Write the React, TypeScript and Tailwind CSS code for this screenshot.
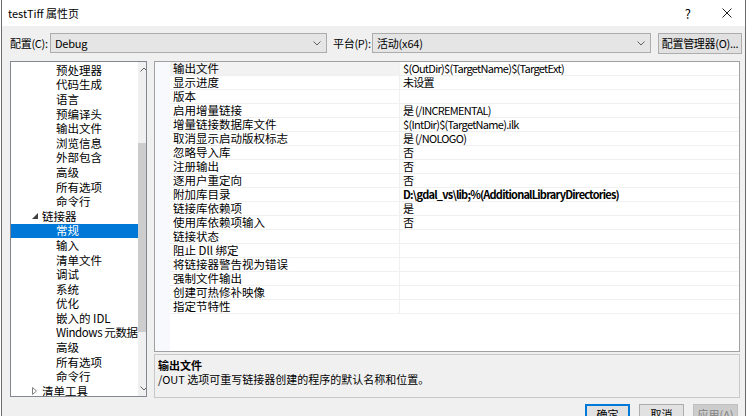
import React from "react";

const FONT = '"Noto Sans CJK SC", "Noto Sans", sans-serif';

interface TreeItem {
  label: string;
  level: 0 | 1;
  expanded?: boolean;
  selected?: boolean;
}

const treeItems: TreeItem[] = [
  { label: "预处理器", level: 1 },
  { label: "代码生成", level: 1 },
  { label: "语言", level: 1 },
  { label: "预编译头", level: 1 },
  { label: "输出文件", level: 1 },
  { label: "浏览信息", level: 1 },
  { label: "外部包含", level: 1 },
  { label: "高级", level: 1 },
  { label: "所有选项", level: 1 },
  { label: "命令行", level: 1 },
  { label: "链接器", level: 0, expanded: true },
  { label: "常规", level: 1, selected: true },
  { label: "输入", level: 1 },
  { label: "清单文件", level: 1 },
  { label: "调试", level: 1 },
  { label: "系统", level: 1 },
  { label: "优化", level: 1 },
  { label: "嵌入的 IDL", level: 1 },
  { label: "Windows 元数据", level: 1 },
  { label: "高级", level: 1 },
  { label: "所有选项", level: 1 },
  { label: "命令行", level: 1 },
  { label: "清单工具", level: 0, expanded: false },
];

const props: { name: string; value: string; bold?: boolean }[] = [
  { name: "输出文件", value: "$(OutDir)$(TargetName)$(TargetExt)" },
  { name: "显示进度", value: "未设置" },
  { name: "版本", value: "" },
  { name: "启用增量链接", value: "是 (/INCREMENTAL)" },
  { name: "增量链接数据库文件", value: "$(IntDir)$(TargetName).ilk" },
  { name: "取消显示启动版权标志", value: "是 (/NOLOGO)" },
  { name: "忽略导入库", value: "否" },
  { name: "注册输出", value: "否" },
  { name: "逐用户重定向", value: "否" },
  { name: "附加库目录", value: "D:\\gdal_vs\\lib;%(AdditionalLibraryDirectories)", bold: true },
  { name: "链接库依赖项", value: "是" },
  { name: "使用库依赖项输入", value: "否" },
  { name: "链接状态", value: "" },
  { name: "阻止 Dll 绑定", value: "" },
  { name: "将链接器警告视为错误", value: "" },
  { name: "强制文件输出", value: "" },
  { name: "创建可热修补映像", value: "" },
  { name: "指定节特性", value: "" },
];

function Chevron({ up = false }: { up?: boolean }) {
  return (
    <svg width="8" height="5" viewBox="0 0 8 5" className={up ? "rotate-180" : ""}>
      <path d="M0.5 0.5 L4 4 L7.5 0.5" fill="none" stroke="#606060" strokeWidth="1" />
    </svg>
  );
}

function Combo({ value, width }: { value: string; width: string }) {
  return (
    <div className={`${width} h-[20px] shrink-0 flex items-center justify-between bg-[#e5e5e5] border border-[#acacac] pl-[4px] pr-[5px]`}>
      <span className="text-[11px] tracking-[-0.2px]">{value}</span>
      <Chevron />
    </div>
  );
}

export default function App() {
  return (
    <div className="w-[748px] h-[416px] overflow-hidden bg-white text-[11.5px] leading-[13px] text-black whitespace-nowrap" style={{ fontFamily: FONT }}>
      <div className="ml-px w-[745px] h-full flex flex-col border-l border-r border-[#6b6b6b]">
        {/* Title bar */}
        <div className="h-[26px] shrink-0 bg-white flex items-center pl-[6px]">
          <span className="text-[11px]">testTiff 属性页</span>
          <span className="ml-auto mr-[31px] text-[13px]">?</span>
          <svg width="10" height="10" viewBox="0 0 10 10" className="mr-[13px]">
            <path d="M0.5 0.5 L9.5 9.5 M9.5 0.5 L0.5 9.5" stroke="#222" strokeWidth="1" />
          </svg>
        </div>

        <div className="flex-1 bg-[#f0f0f0] pl-[8px] pr-[4px] pt-[7px]">
          {/* Config row */}
          <div className="h-[20px] flex items-center text-[11px] tracking-[-0.3px]">
            <span className="w-[40px] shrink-0">配置(C):</span>
            <Combo value="Debug" width="w-[277px]" />
            <span className="ml-[6px] w-[39px] shrink-0">平台(P):</span>
            <Combo value="活动(x64)" width="w-[279px]" />
            <div className="ml-[7px] w-[84px] h-[21px] shrink-0 flex items-center justify-center bg-[#e1e1e1] border border-[#adadad]">
              配置管理器(O)...
            </div>
          </div>

          {/* Main */}
          <div className="mt-[8px] flex gap-[7px]">
            {/* Tree */}
            <div className="w-[137px] h-[336px] flex border border-[#828790] bg-white overflow-hidden">
              <div className="flex-1 pt-px">
                {treeItems.map((it, i) => (
                  <div
                    key={i}
                    className={`h-[14.6px] flex items-center ${it.selected ? "bg-[#0078d7] text-white" : ""} ${it.level === 1 ? "pl-[45px]" : "pl-[21px]"}`}
                  >
                    {it.level === 0 && (
                      <span className="w-[10px] flex items-center">
                        {it.expanded ? (
                          <svg width="6" height="6" viewBox="0 0 6 6">
                            <path d="M6 0 L6 6 L0 6 Z" fill="#404040" />
                          </svg>
                        ) : (
                          <svg width="5" height="8" viewBox="0 0 5 8">
                            <path d="M0.5 0.5 L4.5 4 L0.5 7.5 Z" fill="none" stroke="#808080" strokeWidth="1" />
                          </svg>
                        )}
                      </span>
                    )}
                    <span className={it.label.startsWith("Windows") ? "tracking-[-0.4px]" : ""}>{it.label}</span>
                  </div>
                ))}
              </div>
              {/* Scrollbar */}
              <div className="w-[13px] shrink-0 bg-[#f0f0f0] flex flex-col items-center">
                <div className="h-[14px] flex items-center justify-center">
                  <Chevron up />
                </div>
                <div className="h-[67px]" />
                <div className="w-[13px] h-[189px] bg-[#cdcdcd]" />
                <div className="flex-1" />
                <div className="h-[16px] flex items-center justify-center">
                  <Chevron />
                </div>
              </div>
            </div>

            {/* Right column */}
            <div className="w-[586px] flex flex-col">
              <div className="h-[291px] border border-[#a0a0a0] bg-white flex">
                <div className="w-[15px] shrink-0 bg-[#f7f9fc]" />
                <div className="flex-1">
                  {props.map((p, i) => (
                    <div key={i} className="h-[14px] flex items-center border-b border-[#f0f0f0]">
                      <div className={`w-[230px] h-full flex items-center shrink-0 pl-[3px] border-r border-[#f0f0f0] ${i === 0 ? "bg-[#f2f2f2]" : ""}`}>
                        {p.name}
                      </div>
                      <div className={`pl-[3px] text-[11px] ${p.bold ? "font-bold tracking-[-0.8px]" : "tracking-[-0.7px]"}`}>{p.value}</div>
                    </div>
                  ))}
                </div>
              </div>
              <div className="mt-[2px] h-[44px] border border-[#c8c8c8] bg-[#f0f0f0] pl-[3px] pt-[3px] text-[11px] leading-[14px]">
                <div className="font-bold">输出文件</div>
                <div>/OUT 选项可重写链接器创建的程序的默认名称和位置。</div>
              </div>
            </div>
          </div>

          {/* Buttons */}
          <div className="mt-[6px] flex justify-end gap-[9px] pr-[3px] text-[11px]">
            <div className="w-[45px] h-[22px] flex items-start pt-[2px] justify-center bg-[#e1e1e1] border-2 border-[#0078d7]">确定</div>
            <div className="w-[45px] h-[22px] flex items-start pt-[3px] justify-center bg-[#e1e1e1] border border-[#adadad]">取消</div>
            <div className="w-[45px] h-[22px] flex items-start pt-[3px] justify-center bg-[#cccccc] border border-[#bfbfbf] text-[#838383]">应用(A)</div>
          </div>
        </div>
      </div>
    </div>
  );
}
